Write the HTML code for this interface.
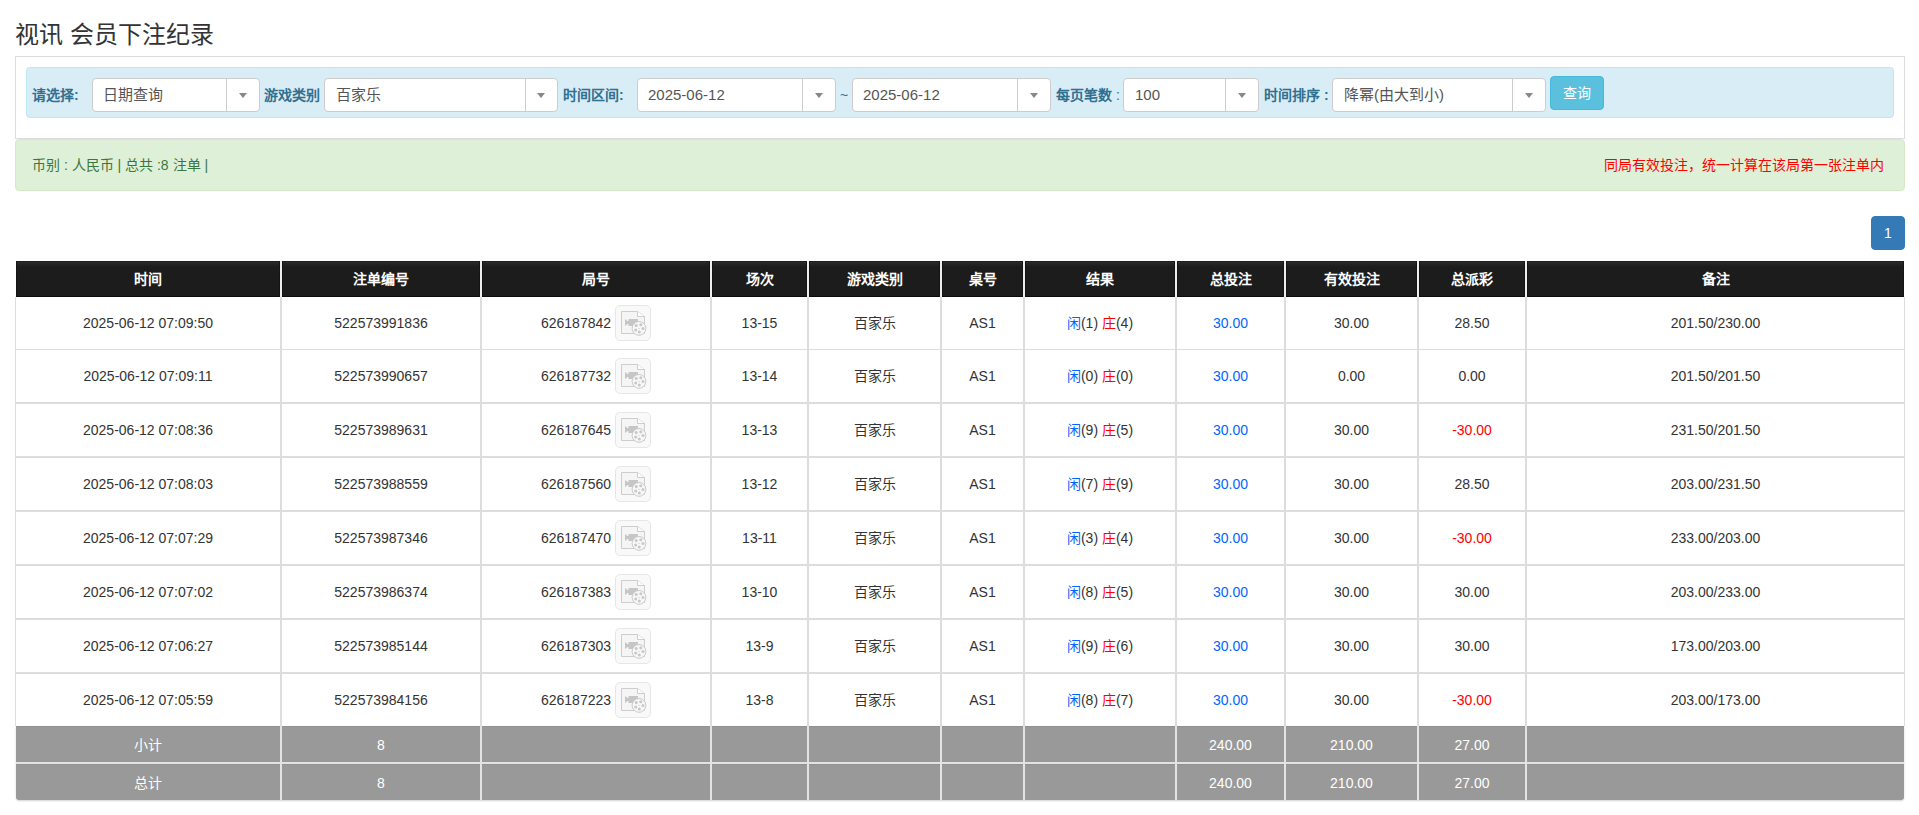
<!DOCTYPE html><html lang="zh-CN"><head><meta charset="utf-8"><title>视讯 会员下注纪录</title><style>
*{box-sizing:border-box;margin:0;padding:0}
html,body{width:1919px;height:815px;overflow:hidden;background:#fff}
body{font-family:"Liberation Sans",sans-serif;font-size:14px;color:#333;position:relative}
.a{position:absolute}
.title{left:15px;top:18px;font-size:24px;line-height:34px;color:#333;white-space:nowrap}
.panel{left:15px;top:56px;width:1890px;height:83px;border:1px solid #ddd;border-bottom-color:#ddd}
.info{left:26px;top:67px;width:1868px;height:51px;background:#d9edf7;border:1px solid #bce8f1;border-radius:4px}
.lbl{top:78px;height:34px;line-height:34px;font-weight:bold;color:#31708f;white-space:nowrap;font-size:14px}
.sel{top:78px;height:34px;background:#fff;border:1px solid #ccc;border-radius:4px;}
.sel .t{position:absolute;left:11px;top:0;line-height:32px;font-size:15px;color:#555;white-space:nowrap}
.sel .d{position:absolute;top:0;bottom:0;width:1px;background:#ccc}
.sel .ar{position:absolute;top:14px;width:0;height:0;border-style:solid;border-width:5px 4px 0 4px;border-color:#888 transparent transparent transparent}
.btn{left:1550px;top:76px;width:54px;height:34px;background:#5bc0de;border:1px solid #46b8da;border-radius:4px;color:#fff;text-align:center;line-height:32px;font-size:14px}
.alert{left:15px;top:139px;width:1890px;height:52px;background:#dff0d8;border:1px solid #d6e9c6;border-radius:4px}
.alert .l{position:absolute;left:16px;top:15px;line-height:20px;color:#3c763d;white-space:nowrap}
.alert .r{position:absolute;right:20px;top:15px;line-height:20px;color:#ff0000;white-space:nowrap}
.pg{left:1871px;top:216px;width:34px;height:34px;background:#337ab7;border:1px solid #337ab7;border-radius:4px;color:#fff;text-align:center;line-height:32px;font-size:14px}
.hd{top:261px;height:36px;background:#1c1c1c;border:1px solid #141414;border-top-color:#1f1f1f;border-bottom-color:#0c0c0c;color:#fff;font-weight:bold;text-align:center;line-height:34px;font-size:14px;white-space:nowrap;background-image:linear-gradient(#2a2a2a,#1c1c1c 5px)}
.c{height:52px;line-height:52px;text-align:center;white-space:nowrap}
.vl{top:297px;height:429px;background:#ddd}
.hl{left:15px;width:1890px;background:#ddd}
.gr{height:36px;background:#999;color:#fff;text-align:center;line-height:36px;white-space:nowrap;border-top:1px solid #929292}
.ib{display:inline-block;vertical-align:middle;width:36px;height:36px;margin-left:4px;position:relative;top:-1px}
.blue{color:#0066ff}.red{color:#ff0000}
</style></head><body>
<div class="a title">视讯 会员下注纪录</div>
<div class="a panel"></div>
<div class="a info"></div>
<div class="a lbl" style="left:32px">请选择:</div>
<div class="a sel" style="left:92px;width:168px"><span class="t" style="left:10px">日期查询</span><span class="d" style="left:133px"></span><span class="ar" style="left:146px"></span></div>
<div class="a lbl" style="left:264px">游戏类别</div>
<div class="a sel" style="left:324px;width:234px"><span class="t" style="left:11px">百家乐</span><span class="d" style="left:200px"></span><span class="ar" style="left:212px"></span></div>
<div class="a lbl" style="left:563px">时间区间:</div>
<div class="a sel" style="left:637px;width:199px"><span class="t" style="left:10px">2025-06-12</span><span class="d" style="left:164px"></span><span class="ar" style="left:177px"></span></div>
<div class="a lbl" style="left:840px;font-weight:normal">~</div>
<div class="a sel" style="left:852px;width:199px"><span class="t" style="left:10px">2025-06-12</span><span class="d" style="left:164px"></span><span class="ar" style="left:177px"></span></div>
<div class="a lbl" style="left:1056px">每页笔数 <span style="font-weight:normal">:</span></div>
<div class="a sel" style="left:1123px;width:136px"><span class="t" style="left:11px">100</span><span class="d" style="left:101px"></span><span class="ar" style="left:114px"></span></div>
<div class="a lbl" style="left:1264px">时间排序 :</div>
<div class="a sel" style="left:1332px;width:214px"><span class="t" style="left:11px">降幂(由大到小)</span><span class="d" style="left:179px"></span><span class="ar" style="left:192px"></span></div>
<div class="a btn">查询</div>
<div class="a alert"><span class="l">币别 : 人民币 | 总共 :8 注单 |</span><span class="r">同局有效投注，统一计算在该局第一张注单内</span></div>
<div class="a pg">1</div>
<div class="a hd" style="left:16px;width:264px">时间</div>
<div class="a hd" style="left:282px;width:198px">注单编号</div>
<div class="a hd" style="left:482px;width:228px">局号</div>
<div class="a hd" style="left:712px;width:95px">场次</div>
<div class="a hd" style="left:809px;width:131px">游戏类别</div>
<div class="a hd" style="left:942px;width:81px">桌号</div>
<div class="a hd" style="left:1025px;width:150px">结果</div>
<div class="a hd" style="left:1177px;width:107px">总投注</div>
<div class="a hd" style="left:1286px;width:131px">有效投注</div>
<div class="a hd" style="left:1419px;width:106px">总派彩</div>
<div class="a hd" style="left:1527px;width:377px">备注</div>
<div class="a" style="left:280px;top:261px;width:2px;height:36px;background:#eee"></div>
<div class="a" style="left:480px;top:261px;width:2px;height:36px;background:#eee"></div>
<div class="a" style="left:710px;top:261px;width:2px;height:36px;background:#eee"></div>
<div class="a" style="left:807px;top:261px;width:2px;height:36px;background:#eee"></div>
<div class="a" style="left:940px;top:261px;width:2px;height:36px;background:#eee"></div>
<div class="a" style="left:1023px;top:261px;width:2px;height:36px;background:#eee"></div>
<div class="a" style="left:1175px;top:261px;width:2px;height:36px;background:#eee"></div>
<div class="a" style="left:1284px;top:261px;width:2px;height:36px;background:#eee"></div>
<div class="a" style="left:1417px;top:261px;width:2px;height:36px;background:#eee"></div>
<div class="a" style="left:1525px;top:261px;width:2px;height:36px;background:#eee"></div>
<div class="a vl" style="left:15px;width:1px"></div>
<div class="a vl" style="left:1904px;width:1px"></div>
<div class="a vl" style="left:280px;width:2px"></div>
<div class="a vl" style="left:480px;width:2px"></div>
<div class="a vl" style="left:710px;width:2px"></div>
<div class="a vl" style="left:807px;width:2px"></div>
<div class="a vl" style="left:940px;width:2px"></div>
<div class="a vl" style="left:1023px;width:2px"></div>
<div class="a vl" style="left:1175px;width:2px"></div>
<div class="a vl" style="left:1284px;width:2px"></div>
<div class="a vl" style="left:1417px;width:2px"></div>
<div class="a vl" style="left:1525px;width:2px"></div>
<div class="a hl" style="top:349px;height:1px"></div>
<div class="a hl" style="top:402px;height:2px"></div>
<div class="a hl" style="top:456px;height:2px"></div>
<div class="a hl" style="top:510px;height:2px"></div>
<div class="a hl" style="top:564px;height:2px"></div>
<div class="a hl" style="top:618px;height:2px"></div>
<div class="a hl" style="top:672px;height:2px"></div>
<div class="a c" style="left:16px;top:297px;width:264px">2025-06-12 07:09:50</div>
<div class="a c" style="left:282px;top:297px;width:198px">522573991836</div>
<div class="a c" style="left:482px;top:297px;width:228px">626187842<span class="ib"><svg width="36" height="36" viewBox="0 0 36 36"><rect x="0.5" y="0.5" width="35" height="35" rx="4.5" fill="#f9f9f9" stroke="#e6e6e6"/>
<path d="M6.5 6.5 H22.5 L29.5 11.5 V28.5 H6.5 Z" fill="#f5f5f5" stroke="#cdcdcd" stroke-width="1"/>
<path d="M22.5 6.5 V11.5 H29.5" fill="#fdfdfd" stroke="#cdcdcd" stroke-width="1"/>
<path d="M10 14 L12.5 16 H13.5 V14 H23 V21 H13.5 V19 H12.5 L10 21 Z" fill="#c6c6c6"/>
<circle cx="24" cy="23.4" r="6.9" fill="#f7f7f7" stroke="#cbcbcb" stroke-width="1"/>
<circle cx="21.2" cy="20.4" r="1.5" fill="#c8c8c8"/><circle cx="25.8" cy="19.7" r="1.5" fill="#c8c8c8"/>
<circle cx="28" cy="23.6" r="1.5" fill="#c8c8c8"/><circle cx="20.7" cy="25.1" r="1.5" fill="#c8c8c8"/>
<circle cx="24.3" cy="27.1" r="1.5" fill="#c8c8c8"/><rect x="23.3" y="23" width="1.5" height="0.8" fill="#d0d0d0"/></svg></span></div>
<div class="a c" style="left:712px;top:297px;width:95px">13-15</div>
<div class="a c" style="left:809px;top:297px;width:131px">百家乐</div>
<div class="a c" style="left:942px;top:297px;width:81px">AS1</div>
<div class="a c" style="left:1025px;top:297px;width:150px"><span class="blue">闲</span>(1) <span class="red">庄</span>(4)</div>
<div class="a c" style="left:1177px;top:297px;width:107px"><span class="blue">30.00</span></div>
<div class="a c" style="left:1286px;top:297px;width:131px">30.00</div>
<div class="a c" style="left:1419px;top:297px;width:106px">28.50</div>
<div class="a c" style="left:1527px;top:297px;width:377px">201.50/230.00</div>
<div class="a c" style="left:16px;top:350px;width:264px">2025-06-12 07:09:11</div>
<div class="a c" style="left:282px;top:350px;width:198px">522573990657</div>
<div class="a c" style="left:482px;top:350px;width:228px">626187732<span class="ib"><svg width="36" height="36" viewBox="0 0 36 36"><rect x="0.5" y="0.5" width="35" height="35" rx="4.5" fill="#f9f9f9" stroke="#e6e6e6"/>
<path d="M6.5 6.5 H22.5 L29.5 11.5 V28.5 H6.5 Z" fill="#f5f5f5" stroke="#cdcdcd" stroke-width="1"/>
<path d="M22.5 6.5 V11.5 H29.5" fill="#fdfdfd" stroke="#cdcdcd" stroke-width="1"/>
<path d="M10 14 L12.5 16 H13.5 V14 H23 V21 H13.5 V19 H12.5 L10 21 Z" fill="#c6c6c6"/>
<circle cx="24" cy="23.4" r="6.9" fill="#f7f7f7" stroke="#cbcbcb" stroke-width="1"/>
<circle cx="21.2" cy="20.4" r="1.5" fill="#c8c8c8"/><circle cx="25.8" cy="19.7" r="1.5" fill="#c8c8c8"/>
<circle cx="28" cy="23.6" r="1.5" fill="#c8c8c8"/><circle cx="20.7" cy="25.1" r="1.5" fill="#c8c8c8"/>
<circle cx="24.3" cy="27.1" r="1.5" fill="#c8c8c8"/><rect x="23.3" y="23" width="1.5" height="0.8" fill="#d0d0d0"/></svg></span></div>
<div class="a c" style="left:712px;top:350px;width:95px">13-14</div>
<div class="a c" style="left:809px;top:350px;width:131px">百家乐</div>
<div class="a c" style="left:942px;top:350px;width:81px">AS1</div>
<div class="a c" style="left:1025px;top:350px;width:150px"><span class="blue">闲</span>(0) <span class="red">庄</span>(0)</div>
<div class="a c" style="left:1177px;top:350px;width:107px"><span class="blue">30.00</span></div>
<div class="a c" style="left:1286px;top:350px;width:131px">0.00</div>
<div class="a c" style="left:1419px;top:350px;width:106px">0.00</div>
<div class="a c" style="left:1527px;top:350px;width:377px">201.50/201.50</div>
<div class="a c" style="left:16px;top:404px;width:264px">2025-06-12 07:08:36</div>
<div class="a c" style="left:282px;top:404px;width:198px">522573989631</div>
<div class="a c" style="left:482px;top:404px;width:228px">626187645<span class="ib"><svg width="36" height="36" viewBox="0 0 36 36"><rect x="0.5" y="0.5" width="35" height="35" rx="4.5" fill="#f9f9f9" stroke="#e6e6e6"/>
<path d="M6.5 6.5 H22.5 L29.5 11.5 V28.5 H6.5 Z" fill="#f5f5f5" stroke="#cdcdcd" stroke-width="1"/>
<path d="M22.5 6.5 V11.5 H29.5" fill="#fdfdfd" stroke="#cdcdcd" stroke-width="1"/>
<path d="M10 14 L12.5 16 H13.5 V14 H23 V21 H13.5 V19 H12.5 L10 21 Z" fill="#c6c6c6"/>
<circle cx="24" cy="23.4" r="6.9" fill="#f7f7f7" stroke="#cbcbcb" stroke-width="1"/>
<circle cx="21.2" cy="20.4" r="1.5" fill="#c8c8c8"/><circle cx="25.8" cy="19.7" r="1.5" fill="#c8c8c8"/>
<circle cx="28" cy="23.6" r="1.5" fill="#c8c8c8"/><circle cx="20.7" cy="25.1" r="1.5" fill="#c8c8c8"/>
<circle cx="24.3" cy="27.1" r="1.5" fill="#c8c8c8"/><rect x="23.3" y="23" width="1.5" height="0.8" fill="#d0d0d0"/></svg></span></div>
<div class="a c" style="left:712px;top:404px;width:95px">13-13</div>
<div class="a c" style="left:809px;top:404px;width:131px">百家乐</div>
<div class="a c" style="left:942px;top:404px;width:81px">AS1</div>
<div class="a c" style="left:1025px;top:404px;width:150px"><span class="blue">闲</span>(9) <span class="red">庄</span>(5)</div>
<div class="a c" style="left:1177px;top:404px;width:107px"><span class="blue">30.00</span></div>
<div class="a c" style="left:1286px;top:404px;width:131px">30.00</div>
<div class="a c" style="left:1419px;top:404px;width:106px"><span class="red">-30.00</span></div>
<div class="a c" style="left:1527px;top:404px;width:377px">231.50/201.50</div>
<div class="a c" style="left:16px;top:458px;width:264px">2025-06-12 07:08:03</div>
<div class="a c" style="left:282px;top:458px;width:198px">522573988559</div>
<div class="a c" style="left:482px;top:458px;width:228px">626187560<span class="ib"><svg width="36" height="36" viewBox="0 0 36 36"><rect x="0.5" y="0.5" width="35" height="35" rx="4.5" fill="#f9f9f9" stroke="#e6e6e6"/>
<path d="M6.5 6.5 H22.5 L29.5 11.5 V28.5 H6.5 Z" fill="#f5f5f5" stroke="#cdcdcd" stroke-width="1"/>
<path d="M22.5 6.5 V11.5 H29.5" fill="#fdfdfd" stroke="#cdcdcd" stroke-width="1"/>
<path d="M10 14 L12.5 16 H13.5 V14 H23 V21 H13.5 V19 H12.5 L10 21 Z" fill="#c6c6c6"/>
<circle cx="24" cy="23.4" r="6.9" fill="#f7f7f7" stroke="#cbcbcb" stroke-width="1"/>
<circle cx="21.2" cy="20.4" r="1.5" fill="#c8c8c8"/><circle cx="25.8" cy="19.7" r="1.5" fill="#c8c8c8"/>
<circle cx="28" cy="23.6" r="1.5" fill="#c8c8c8"/><circle cx="20.7" cy="25.1" r="1.5" fill="#c8c8c8"/>
<circle cx="24.3" cy="27.1" r="1.5" fill="#c8c8c8"/><rect x="23.3" y="23" width="1.5" height="0.8" fill="#d0d0d0"/></svg></span></div>
<div class="a c" style="left:712px;top:458px;width:95px">13-12</div>
<div class="a c" style="left:809px;top:458px;width:131px">百家乐</div>
<div class="a c" style="left:942px;top:458px;width:81px">AS1</div>
<div class="a c" style="left:1025px;top:458px;width:150px"><span class="blue">闲</span>(7) <span class="red">庄</span>(9)</div>
<div class="a c" style="left:1177px;top:458px;width:107px"><span class="blue">30.00</span></div>
<div class="a c" style="left:1286px;top:458px;width:131px">30.00</div>
<div class="a c" style="left:1419px;top:458px;width:106px">28.50</div>
<div class="a c" style="left:1527px;top:458px;width:377px">203.00/231.50</div>
<div class="a c" style="left:16px;top:512px;width:264px">2025-06-12 07:07:29</div>
<div class="a c" style="left:282px;top:512px;width:198px">522573987346</div>
<div class="a c" style="left:482px;top:512px;width:228px">626187470<span class="ib"><svg width="36" height="36" viewBox="0 0 36 36"><rect x="0.5" y="0.5" width="35" height="35" rx="4.5" fill="#f9f9f9" stroke="#e6e6e6"/>
<path d="M6.5 6.5 H22.5 L29.5 11.5 V28.5 H6.5 Z" fill="#f5f5f5" stroke="#cdcdcd" stroke-width="1"/>
<path d="M22.5 6.5 V11.5 H29.5" fill="#fdfdfd" stroke="#cdcdcd" stroke-width="1"/>
<path d="M10 14 L12.5 16 H13.5 V14 H23 V21 H13.5 V19 H12.5 L10 21 Z" fill="#c6c6c6"/>
<circle cx="24" cy="23.4" r="6.9" fill="#f7f7f7" stroke="#cbcbcb" stroke-width="1"/>
<circle cx="21.2" cy="20.4" r="1.5" fill="#c8c8c8"/><circle cx="25.8" cy="19.7" r="1.5" fill="#c8c8c8"/>
<circle cx="28" cy="23.6" r="1.5" fill="#c8c8c8"/><circle cx="20.7" cy="25.1" r="1.5" fill="#c8c8c8"/>
<circle cx="24.3" cy="27.1" r="1.5" fill="#c8c8c8"/><rect x="23.3" y="23" width="1.5" height="0.8" fill="#d0d0d0"/></svg></span></div>
<div class="a c" style="left:712px;top:512px;width:95px">13-11</div>
<div class="a c" style="left:809px;top:512px;width:131px">百家乐</div>
<div class="a c" style="left:942px;top:512px;width:81px">AS1</div>
<div class="a c" style="left:1025px;top:512px;width:150px"><span class="blue">闲</span>(3) <span class="red">庄</span>(4)</div>
<div class="a c" style="left:1177px;top:512px;width:107px"><span class="blue">30.00</span></div>
<div class="a c" style="left:1286px;top:512px;width:131px">30.00</div>
<div class="a c" style="left:1419px;top:512px;width:106px"><span class="red">-30.00</span></div>
<div class="a c" style="left:1527px;top:512px;width:377px">233.00/203.00</div>
<div class="a c" style="left:16px;top:566px;width:264px">2025-06-12 07:07:02</div>
<div class="a c" style="left:282px;top:566px;width:198px">522573986374</div>
<div class="a c" style="left:482px;top:566px;width:228px">626187383<span class="ib"><svg width="36" height="36" viewBox="0 0 36 36"><rect x="0.5" y="0.5" width="35" height="35" rx="4.5" fill="#f9f9f9" stroke="#e6e6e6"/>
<path d="M6.5 6.5 H22.5 L29.5 11.5 V28.5 H6.5 Z" fill="#f5f5f5" stroke="#cdcdcd" stroke-width="1"/>
<path d="M22.5 6.5 V11.5 H29.5" fill="#fdfdfd" stroke="#cdcdcd" stroke-width="1"/>
<path d="M10 14 L12.5 16 H13.5 V14 H23 V21 H13.5 V19 H12.5 L10 21 Z" fill="#c6c6c6"/>
<circle cx="24" cy="23.4" r="6.9" fill="#f7f7f7" stroke="#cbcbcb" stroke-width="1"/>
<circle cx="21.2" cy="20.4" r="1.5" fill="#c8c8c8"/><circle cx="25.8" cy="19.7" r="1.5" fill="#c8c8c8"/>
<circle cx="28" cy="23.6" r="1.5" fill="#c8c8c8"/><circle cx="20.7" cy="25.1" r="1.5" fill="#c8c8c8"/>
<circle cx="24.3" cy="27.1" r="1.5" fill="#c8c8c8"/><rect x="23.3" y="23" width="1.5" height="0.8" fill="#d0d0d0"/></svg></span></div>
<div class="a c" style="left:712px;top:566px;width:95px">13-10</div>
<div class="a c" style="left:809px;top:566px;width:131px">百家乐</div>
<div class="a c" style="left:942px;top:566px;width:81px">AS1</div>
<div class="a c" style="left:1025px;top:566px;width:150px"><span class="blue">闲</span>(8) <span class="red">庄</span>(5)</div>
<div class="a c" style="left:1177px;top:566px;width:107px"><span class="blue">30.00</span></div>
<div class="a c" style="left:1286px;top:566px;width:131px">30.00</div>
<div class="a c" style="left:1419px;top:566px;width:106px">30.00</div>
<div class="a c" style="left:1527px;top:566px;width:377px">203.00/233.00</div>
<div class="a c" style="left:16px;top:620px;width:264px">2025-06-12 07:06:27</div>
<div class="a c" style="left:282px;top:620px;width:198px">522573985144</div>
<div class="a c" style="left:482px;top:620px;width:228px">626187303<span class="ib"><svg width="36" height="36" viewBox="0 0 36 36"><rect x="0.5" y="0.5" width="35" height="35" rx="4.5" fill="#f9f9f9" stroke="#e6e6e6"/>
<path d="M6.5 6.5 H22.5 L29.5 11.5 V28.5 H6.5 Z" fill="#f5f5f5" stroke="#cdcdcd" stroke-width="1"/>
<path d="M22.5 6.5 V11.5 H29.5" fill="#fdfdfd" stroke="#cdcdcd" stroke-width="1"/>
<path d="M10 14 L12.5 16 H13.5 V14 H23 V21 H13.5 V19 H12.5 L10 21 Z" fill="#c6c6c6"/>
<circle cx="24" cy="23.4" r="6.9" fill="#f7f7f7" stroke="#cbcbcb" stroke-width="1"/>
<circle cx="21.2" cy="20.4" r="1.5" fill="#c8c8c8"/><circle cx="25.8" cy="19.7" r="1.5" fill="#c8c8c8"/>
<circle cx="28" cy="23.6" r="1.5" fill="#c8c8c8"/><circle cx="20.7" cy="25.1" r="1.5" fill="#c8c8c8"/>
<circle cx="24.3" cy="27.1" r="1.5" fill="#c8c8c8"/><rect x="23.3" y="23" width="1.5" height="0.8" fill="#d0d0d0"/></svg></span></div>
<div class="a c" style="left:712px;top:620px;width:95px">13-9</div>
<div class="a c" style="left:809px;top:620px;width:131px">百家乐</div>
<div class="a c" style="left:942px;top:620px;width:81px">AS1</div>
<div class="a c" style="left:1025px;top:620px;width:150px"><span class="blue">闲</span>(9) <span class="red">庄</span>(6)</div>
<div class="a c" style="left:1177px;top:620px;width:107px"><span class="blue">30.00</span></div>
<div class="a c" style="left:1286px;top:620px;width:131px">30.00</div>
<div class="a c" style="left:1419px;top:620px;width:106px">30.00</div>
<div class="a c" style="left:1527px;top:620px;width:377px">173.00/203.00</div>
<div class="a c" style="left:16px;top:674px;width:264px">2025-06-12 07:05:59</div>
<div class="a c" style="left:282px;top:674px;width:198px">522573984156</div>
<div class="a c" style="left:482px;top:674px;width:228px">626187223<span class="ib"><svg width="36" height="36" viewBox="0 0 36 36"><rect x="0.5" y="0.5" width="35" height="35" rx="4.5" fill="#f9f9f9" stroke="#e6e6e6"/>
<path d="M6.5 6.5 H22.5 L29.5 11.5 V28.5 H6.5 Z" fill="#f5f5f5" stroke="#cdcdcd" stroke-width="1"/>
<path d="M22.5 6.5 V11.5 H29.5" fill="#fdfdfd" stroke="#cdcdcd" stroke-width="1"/>
<path d="M10 14 L12.5 16 H13.5 V14 H23 V21 H13.5 V19 H12.5 L10 21 Z" fill="#c6c6c6"/>
<circle cx="24" cy="23.4" r="6.9" fill="#f7f7f7" stroke="#cbcbcb" stroke-width="1"/>
<circle cx="21.2" cy="20.4" r="1.5" fill="#c8c8c8"/><circle cx="25.8" cy="19.7" r="1.5" fill="#c8c8c8"/>
<circle cx="28" cy="23.6" r="1.5" fill="#c8c8c8"/><circle cx="20.7" cy="25.1" r="1.5" fill="#c8c8c8"/>
<circle cx="24.3" cy="27.1" r="1.5" fill="#c8c8c8"/><rect x="23.3" y="23" width="1.5" height="0.8" fill="#d0d0d0"/></svg></span></div>
<div class="a c" style="left:712px;top:674px;width:95px">13-8</div>
<div class="a c" style="left:809px;top:674px;width:131px">百家乐</div>
<div class="a c" style="left:942px;top:674px;width:81px">AS1</div>
<div class="a c" style="left:1025px;top:674px;width:150px"><span class="blue">闲</span>(8) <span class="red">庄</span>(7)</div>
<div class="a c" style="left:1177px;top:674px;width:107px"><span class="blue">30.00</span></div>
<div class="a c" style="left:1286px;top:674px;width:131px">30.00</div>
<div class="a c" style="left:1419px;top:674px;width:106px"><span class="red">-30.00</span></div>
<div class="a c" style="left:1527px;top:674px;width:377px">203.00/173.00</div>
<div class="a" style="left:16px;top:726px;width:1888px;height:74px;background:#e3e3e3;border-radius:0 0 3px 3px;box-shadow:0 1px 2px rgba(0,0,0,.18)"></div>
<div class="a gr" style="left:16px;top:726px;width:264px;">小计</div>
<div class="a gr" style="left:282px;top:726px;width:198px;">8</div>
<div class="a gr" style="left:482px;top:726px;width:228px;"></div>
<div class="a gr" style="left:712px;top:726px;width:95px;"></div>
<div class="a gr" style="left:809px;top:726px;width:131px;"></div>
<div class="a gr" style="left:942px;top:726px;width:81px;"></div>
<div class="a gr" style="left:1025px;top:726px;width:150px;"></div>
<div class="a gr" style="left:1177px;top:726px;width:107px;">240.00</div>
<div class="a gr" style="left:1286px;top:726px;width:131px;">210.00</div>
<div class="a gr" style="left:1419px;top:726px;width:106px;">27.00</div>
<div class="a gr" style="left:1527px;top:726px;width:377px;"></div>
<div class="a gr" style="left:16px;top:764px;width:264px;border-bottom-left-radius:3px;">总计</div>
<div class="a gr" style="left:282px;top:764px;width:198px;">8</div>
<div class="a gr" style="left:482px;top:764px;width:228px;"></div>
<div class="a gr" style="left:712px;top:764px;width:95px;"></div>
<div class="a gr" style="left:809px;top:764px;width:131px;"></div>
<div class="a gr" style="left:942px;top:764px;width:81px;"></div>
<div class="a gr" style="left:1025px;top:764px;width:150px;"></div>
<div class="a gr" style="left:1177px;top:764px;width:107px;">240.00</div>
<div class="a gr" style="left:1286px;top:764px;width:131px;">210.00</div>
<div class="a gr" style="left:1419px;top:764px;width:106px;">27.00</div>
<div class="a gr" style="left:1527px;top:764px;width:377px;border-bottom-right-radius:3px;"></div>
</body></html>
